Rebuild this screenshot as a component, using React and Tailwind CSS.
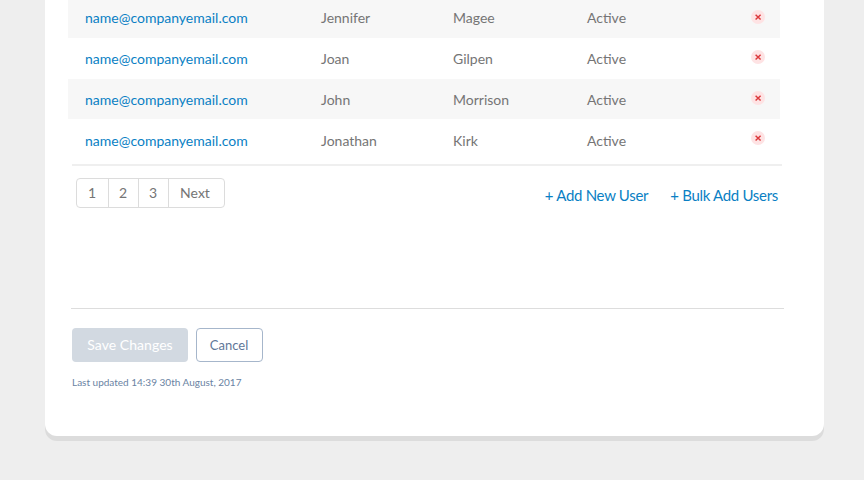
const users = [
  { first: 'Jennifer', last: 'Magee', row: 'h-[38px] bg-[#f7f7f7]', cell: '-mt-px', icon: 'pt-[10px]' },
  { first: 'Joan', last: 'Gilpen', row: 'h-[41px]', cell: 'mt-[2px]', icon: 'pt-[12px]' },
  { first: 'John', last: 'Morrison', row: 'h-[40px] bg-[#f7f7f7]', cell: 'mt-[2px]', icon: 'pt-[12px]' },
  { first: 'Jonathan', last: 'Kirk', row: 'h-[45px]', cell: 'mt-[3px]', icon: 'pt-[12px]' },
];

function RemoveButton() {
  return (
    <button aria-label="Remove user" className="block size-[14px] rounded-full bg-[#fee3e4]">
      <svg viewBox="0 0 14 14" className="block size-[14px]" fill="none" stroke="#dc3a3d" strokeWidth="1.5">
        <path d="M4.6 4.8 9.6 9.5M9.6 4.8 4.6 9.5" />
      </svg>
    </button>
  );
}

function UserRow({ user }) {
  return (
    <div className={`flex w-[712px] items-start pl-[17px] ${user.row}`}>
      <div className={`flex leading-[38px] ${user.cell}`}>
        <div className="w-[236px] text-[#0a7fc4]">name@companyemail.com</div>
        <div className="w-[132px]">{user.first}</div>
        <div className="w-[134px]">{user.last}</div>
        <div className="w-[164px]">Active</div>
      </div>
      <div className={user.icon}>
        <RemoveButton />
      </div>
    </div>
  );
}

export default function App() {
  return (
    <div className="h-[480px] w-[864px] overflow-hidden bg-[#eeeeee] pl-[45px] font-['Lato',sans-serif] text-[14px] text-[#757575]">
      <main className="flex h-[436px] w-[779px] flex-col rounded-b-[12px] bg-white pl-[23px] shadow-[0_5px_0_#dcdcdc]">
        {users.map((user) => (
          <UserRow key={user.first} user={user} />
        ))}
        <div className="ml-[4px] h-[2px] w-[710px] bg-[#efefef]" />
        <div className="flex h-[142px] w-[710px] items-start pl-[8px] pt-[12px]">
          <nav className="flex h-[30px] w-[149px] divide-x divide-[#dcdcdc] rounded-[4px] border border-[#dcdcdc] leading-[28px]">
            <button className="w-[32px] pr-px">1</button>
            <button className="w-[30px] pr-px">2</button>
            <button className="w-[30px] pr-px">3</button>
            <button className="grow pr-[3px]">Next</button>
          </nav>
          <div className="ml-auto flex gap-[22px] pt-[5px] text-[15px] leading-[24px] tracking-[-0.3px] whitespace-nowrap text-[#0a7fc4]">
            <a>+ Add New User</a>
            <a>+ Bulk Add Users</a>
          </div>
        </div>
        <div className="ml-[3px] h-px w-[713px] bg-[#dddddd]" />
        <div className="ml-[4px] flex gap-[8px] pt-[19px]">
          <button className="h-[34px] w-[116px] rounded-[4px] bg-[#d2d9e1] pb-[2px] tracking-[0.05px] text-white">Save Changes</button>
          <button className="h-[34px] w-[67px] rounded-[4px] border border-[#a6b6cb] pr-px pt-[2px] text-[13px] text-[#5f7899]">Cancel</button>
        </div>
        <p className="ml-[4px] pt-[12px] text-[10px] leading-[16px] text-[#6a83a3]">Last updated 14:39 30th August, 2017</p>
      </main>
    </div>
  );
}
